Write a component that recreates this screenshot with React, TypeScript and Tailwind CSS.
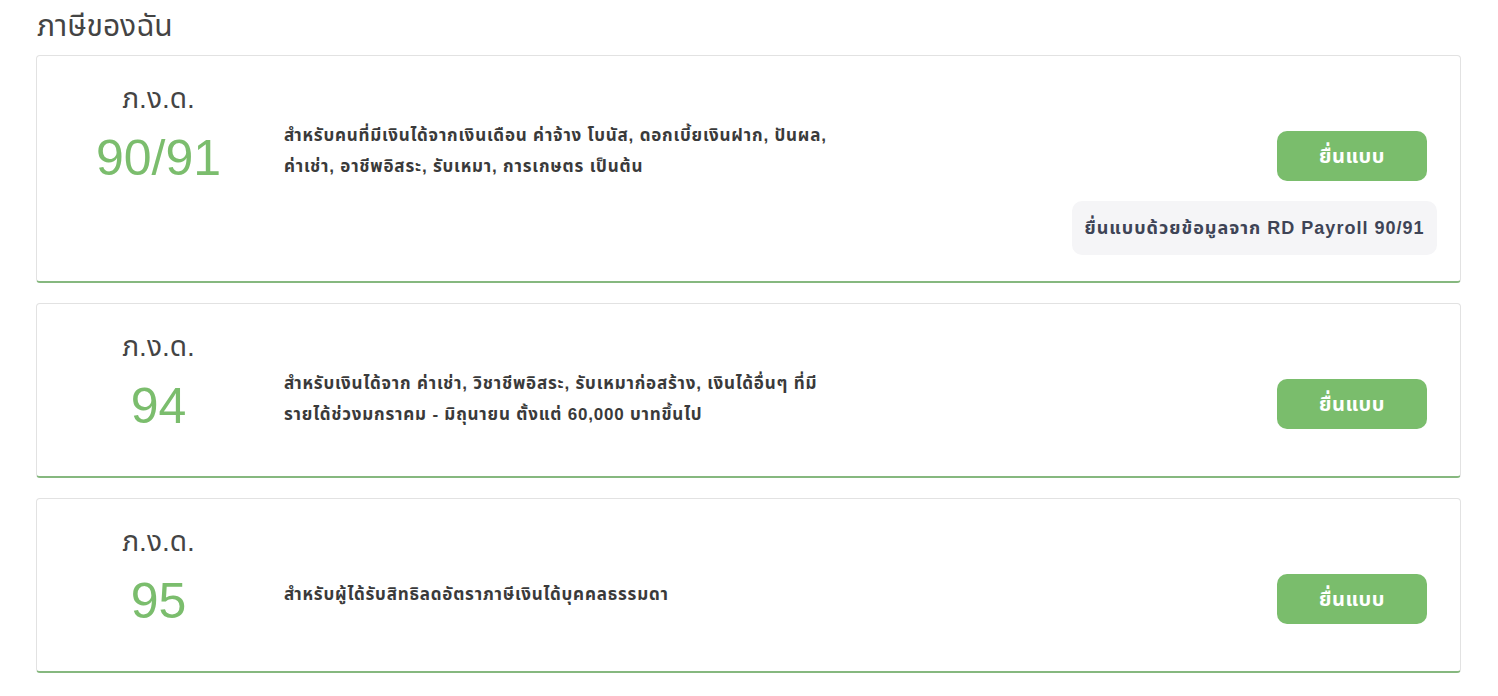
const FONT = { fontFamily: '"Liberation Sans", "Noto Sans", "Noto Sans Thai", Tahoma, sans-serif' };

interface TaxForm {
  code: string;
  lines: string[];
  extra?: string;
}

const forms: TaxForm[] = [
  {
    code: "90/91",
    lines: [
      "สำหรับคนที่มีเงินได้จากเงินเดือน ค่าจ้าง โบนัส, ดอกเบี้ยเงินฝาก, ปันผล,",
      "ค่าเช่า, อาชีพอิสระ, รับเหมา, การเกษตร เป็นต้น",
    ],
    extra: "ยื่นแบบด้วยข้อมูลจาก RD Payroll 90/91",
  },
  {
    code: "94",
    lines: [
      "สำหรับเงินได้จาก ค่าเช่า, วิชาชีพอิสระ, รับเหมาก่อสร้าง, เงินได้อื่นๆ ที่มี",
      "รายได้ช่วงมกราคม - มิถุนายน ตั้งแต่ 60,000 บาทขึ้นไป",
    ],
  },
  {
    code: "95",
    lines: ["สำหรับผู้ได้รับสิทธิลดอัตราภาษีเงินได้บุคคลธรรมดา"],
  },
];

function FormCard({ form }: { form: TaxForm }) {
  return (
    <div className="flex items-start rounded-[4px] border border-[#e2e2e2] border-b-2 border-b-[#86b87f] bg-white pt-[18px]">
      <div className="w-[243px] shrink-0 pt-[7px] text-center">
        <div className="text-[28px] leading-[36px] text-[#444]">ภ.ง.ด.</div>
        <div className="mt-[11px] text-[50px] leading-[60px] text-[#7bbd6d]">{form.code}</div>
      </div>
      <div className="ml-[4px] flex h-[154px] items-center">
        <div className="text-[17px] font-bold leading-[31px] tracking-[0.8px] text-[#3a3a3a]">
          {form.lines.map((l) => (
            <div key={l} className="whitespace-nowrap">
              {l}
            </div>
          ))}
        </div>
      </div>
      <div className="ml-auto flex flex-col items-end pr-[23px]">
        <button className="mr-[10px] mt-[57px] h-[50px] w-[150px] rounded-[10px] bg-[#7abd6c] text-[20px] font-bold tracking-[0.5px] text-white">
          ยื่นแบบ
        </button>
        {form.extra && (
          <div className="mb-[26px] mt-[20px] flex h-[54px] w-[365px] items-center justify-center rounded-[10px] bg-[#f5f5f7] text-[18px] font-bold tracking-[1px] text-[#3e4456]">
            {form.extra}
          </div>
        )}
      </div>
    </div>
  );
}

export default function App() {
  return (
    <div className="min-h-screen bg-white pl-[36px] pr-[37px]" style={FONT}>
      <h1 className="pl-[1px] pt-[8px] text-[30px] leading-[36px] text-[#444]">ภาษีของฉัน</h1>
      <div className="mt-[11px] flex flex-col gap-[20px]">
        {forms.map((f) => (
          <FormCard key={f.code} form={f} />
        ))}
      </div>
    </div>
  );
}
